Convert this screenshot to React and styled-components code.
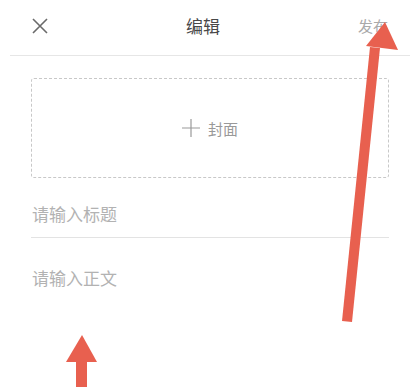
import React from 'react'
import styled, { createGlobalStyle } from 'styled-components'

const GlobalStyle = createGlobalStyle`
  html, body {
    margin: 0;
    padding: 0;
    background: #ffffff;
    font-family: "Noto Sans CJK SC", "Noto Sans", sans-serif;
  }
`

const Page = styled.div`
  position: relative;
  width: 412px;
  height: 387px;
  overflow: hidden;
  background: #ffffff;
`

const Header = styled.header`
  display: flex;
  align-items: center;
  justify-content: space-between;
  height: 52px;
  padding: 0 22px 3px 22px;
  margin: 0 2px 0 10px;
  border-bottom: 1px solid #e6e6e6;
`

const CloseButton = styled.button`
  display: flex;
  align-items: center;
  justify-content: center;
  width: 16px;
  height: 16px;
  padding: 0;
  border: none;
  background: none;
`

const Title = styled.h1`
  margin: 0;
  font-size: 17px;
  font-weight: 400;
  color: #484848;
  line-height: 20px;
`

const Publish = styled.span`
  font-size: 15px;
  color: #aaaaaa;
  line-height: 20px;
`

const Body = styled.main`
  padding: 0 23px 0 31px;
`

const Cover = styled.div`
  display: flex;
  align-items: center;
  justify-content: center;
  gap: 8px;
  height: 100px;
  margin-top: 22px;
  box-sizing: border-box;
  border: 1px dashed #c8c8c8;
  border-radius: 3px;
  color: #999999;
  font-size: 15px;
`

const Field = styled.div`
  padding: ${(p) => p.$pad};
  border-bottom: ${(p) => (p.$line ? '1px solid #e3e3e3' : 'none')};
  padding-left: 1px;
  font-size: 17px;
  line-height: 20px;
  color: #b2b2b2;
`

const Overlay = styled.svg`
  position: absolute;
  left: 0;
  top: 0;
  pointer-events: none;
`

const ARROW = '#e8604f'

export default function App() {
  return (
    <Page>
      <GlobalStyle />
      <Header>
        <CloseButton>
          <svg width="16" height="16" viewBox="0 0 16 16">
            <path d="M1 1L15 15M15 1L1 15" stroke="#6a6a6a" strokeWidth="1.6" />
          </svg>
        </CloseButton>
        <Title>编辑</Title>
        <Publish>发布</Publish>
      </Header>
      <Body>
        <Cover>
          <svg width="18" height="18" viewBox="0 0 18 18">
            <path d="M9 0V18M0 9H18" stroke="#9a9a9a" strokeWidth="1.2" />
          </svg>
          <span>封面</span>
        </Cover>
        <Field $pad="26px 0 13px" $line>请输入标题</Field>
        <Field $pad="30px 0 10px">请输入正文</Field>
      </Body>
      <Overlay width="412" height="387" viewBox="0 0 412 387">
        <polygon points="342,321 352,322 380,48 370,47" fill={ARROW} />
        <polygon points="385,22 366,46 398,50" fill={ARROW} />
        <polygon points="82,335 66,362 97,362" fill={ARROW} />
        <rect x="76" y="361" width="11" height="30" fill={ARROW} />
      </Overlay>
    </Page>
  )
}
